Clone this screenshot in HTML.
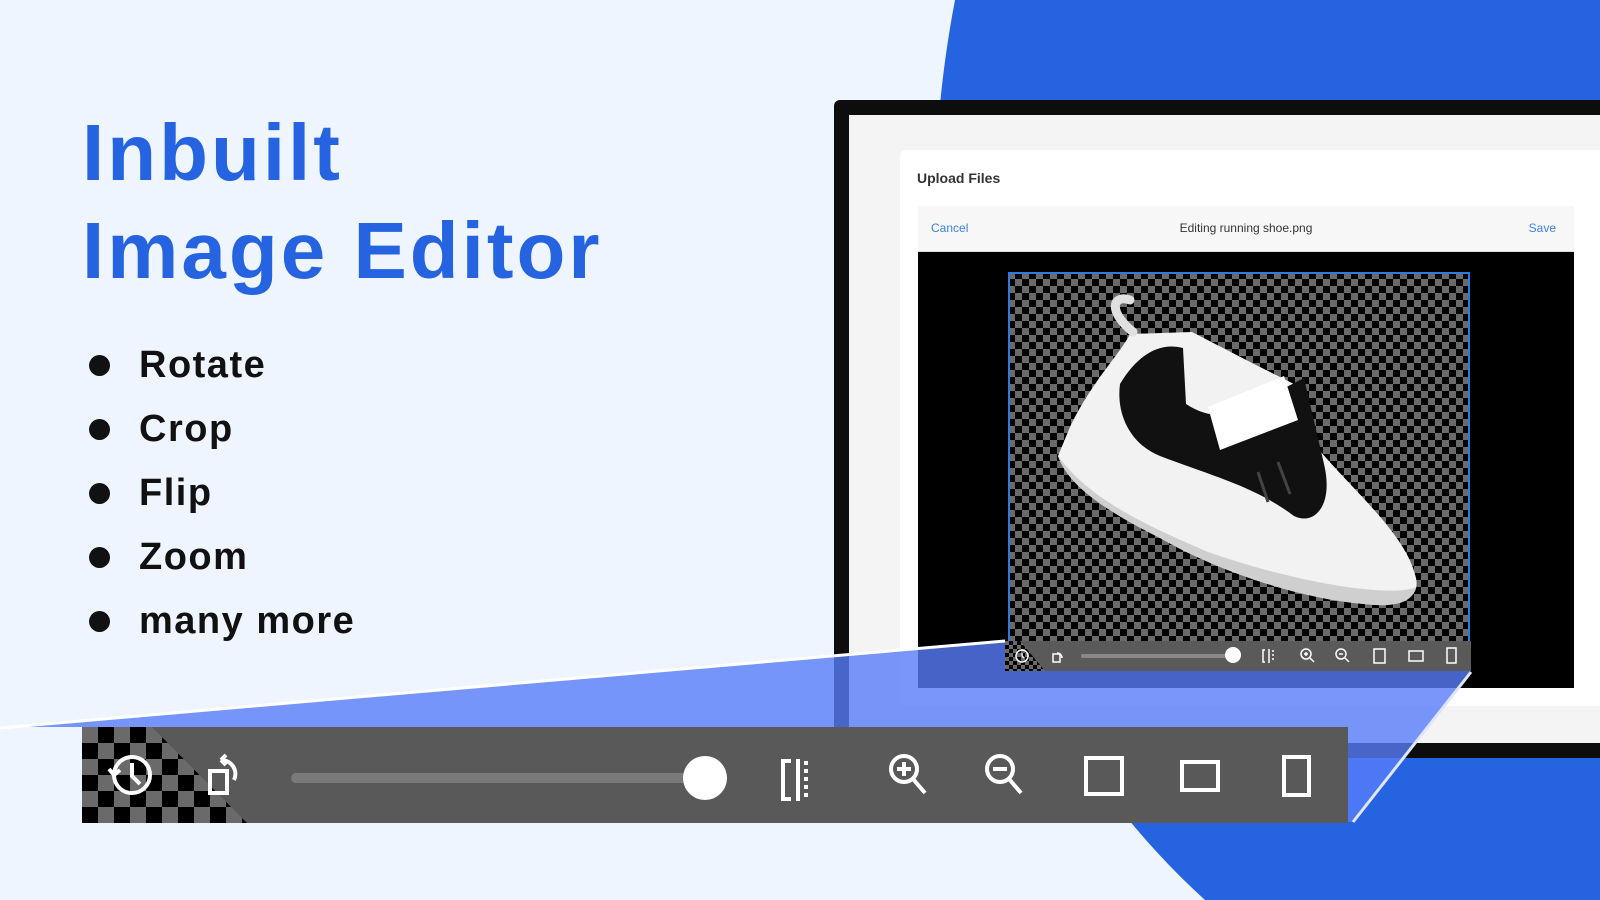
<!DOCTYPE html>
<html><head><meta charset="utf-8"><style>
*{margin:0;padding:0;box-sizing:border-box}
body{width:1600px;height:900px;overflow:hidden;background:#eff5ff;position:relative;font-family:"Liberation Sans",sans-serif}
.abs{position:absolute}
h1{position:absolute;left:82px;top:104px;font-size:80px;line-height:98px;color:#2563e0;font-weight:bold;letter-spacing:3px}
.li{position:absolute;left:139px;font-size:38px;font-weight:bold;color:#111;letter-spacing:1.5px}
.dot{position:absolute;left:89px;width:21px;height:21px;border-radius:50%;background:#111}
.chk{background:repeating-conic-gradient(#000 0 25%,#6a6a6a 0 50%) 0 0/16px 16px}
</style></head><body>
<svg class="abs" style="left:0;top:0" width="1600" height="900">
<path d="M955,0 C905,260 930,650 1205,900 L1600,900 L1600,0 Z" fill="#2563e0"/>
</svg>
<h1>Inbuilt<br>Image Editor</h1>
<div class="dot" style="top:355px"></div><div class="li" style="top:344px">Rotate</div>
<div class="dot" style="top:419px"></div><div class="li" style="top:408px">Crop</div>
<div class="dot" style="top:483px"></div><div class="li" style="top:472px">Flip</div>
<div class="dot" style="top:547px"></div><div class="li" style="top:536px">Zoom</div>
<div class="dot" style="top:611px"></div><div class="li" style="top:600px">many more</div>

<!-- monitor -->
<div class="abs" style="left:834px;top:100px;width:780px;height:658px;background:#0d0d0d;border-radius:6px 0 0 0"></div>
<div class="abs" style="left:849px;top:115px;width:760px;height:628px;background:#f4f4f4"></div>
<div class="abs" style="left:900px;top:150px;width:720px;height:556px;background:#fff;border-radius:6px"></div>
<div class="abs" style="left:917px;top:170px;font-size:14px;font-weight:bold;color:#333">Upload Files</div>
<div class="abs" style="left:918px;top:206px;width:656px;height:46px;background:#f7f7f7;border-bottom:1px solid #ddd;font-size:12px">
<span class="abs" style="left:13px;top:15px;color:#3b82e0">Cancel</span>
<span class="abs" style="left:0;width:656px;text-align:center;top:15px;color:#333">Editing running shoe.png</span>
<span class="abs" style="right:18px;top:15px;color:#3b82e0">Save</span></div>
<div class="abs" style="left:918px;top:252px;width:656px;height:436px;background:#000"></div>
<div class="abs chk" style="left:1008px;top:272px;width:462px;height:370px;background-size:14px 14px"></div>
<div class="abs" style="left:1008px;top:272px;width:462px;height:383px;border:2px solid #2d7be0"></div>
<!-- shoe -->
<svg class="abs" style="left:1008px;top:272px" width="462" height="370">
<path d="M62,155 C82,112 112,82 122,62 L184,60 L246,92 L286,112 L306,172 C348,222 398,262 408,306 C413,328 388,336 356,332 C286,326 204,296 152,266 C100,240 60,214 50,184 Z" fill="#f2f2f2"/>
<path d="M50,184 C60,214 100,240 152,266 C204,296 286,326 356,332 C388,336 405,330 408,315 C390,325 300,315 200,280 C130,250 80,225 50,184Z" fill="#cfcfcf"/>
<path d="M112,112 C130,82 152,70 175,76 L178,132 C205,150 235,146 265,122 L296,106 L316,192 C326,234 306,254 286,244 C246,214 204,204 152,184 C122,172 108,142 112,112Z" fill="#111"/>
<path d="M200,135 L276,104 L290,148 L212,178 Z" fill="#fff"/>
<path d="M125,60 C100,40 104,22 122,28" stroke="#e0e0e0" stroke-width="9" fill="none" stroke-linecap="round"/>
<path d="M250,200 L260,230 M270,190 L282,222" stroke="#444" stroke-width="3"/>
</svg>
<!-- blue overlay -->
<svg class="abs" style="left:0;top:0" width="1600" height="900">
<polygon points="0,728 1005,641 1471,670 1353,822 1348,822 1348,727 0,727" fill="rgba(88,125,250,0.8)"/>
<polyline points="0,728 1005,641" stroke="#fff" stroke-width="3" fill="none"/>
<polyline points="1471,672 1353,822" stroke="#dfe6ff" stroke-width="3" fill="none"/>
</svg>
<!-- small toolbar -->
<div class="abs" style="left:1005px;top:641px;width:466px;height:30px;background:#5a5a5a"></div>
<div class="abs chk" style="left:1005px;top:641px;width:40px;height:30px;background-size:8px 8px;clip-path:polygon(0 0,15px 0,40px 30px,0 30px)"></div>
<div class="abs" style="left:1081px;top:654px;width:151px;height:4px;background:#888;border-radius:2px"></div>
<div class="abs" style="left:1225px;top:647px;width:16px;height:16px;background:#fff;border-radius:50%"></div>
<svg class="abs" style="left:1005px;top:641px" width="466" height="30" fill="none" stroke="#fff" stroke-width="1.5">
<circle cx="17" cy="15" r="6"/><path d="M17,12v3l2,2"/>
<rect x="48" y="13" width="7" height="8"/><path d="M52,12 a5,5 0 0 1 5,5"/>
<path d="M264,8v14M260,9h-2v12h2" /><path d="M268,9v12" stroke-dasharray="2 2"/>
<circle cx="301" cy="13" r="5"/><path d="M305,17l4,4M299,13h4M301,11v4"/>
<circle cx="336" cy="13" r="5"/><path d="M340,17l4,4M334,13h4"/>
<rect x="369" y="8" width="11" height="14"/><rect x="404" y="10" width="14" height="10"/><rect x="442" y="7" width="9" height="15"/>
</svg>
<!-- big toolbar -->
<div class="abs" style="left:82px;top:727px;width:1266px;height:96px;background:#595959"></div>
<div class="abs chk" style="left:82px;top:727px;width:165px;height:96px;background-size:32px 32px;clip-path:polygon(0 0,70px 0,165px 96px,0 96px)"></div>
<div class="abs" style="left:291px;top:773px;width:413px;height:10px;background:#7a7a7a;border-radius:5px"></div>
<div class="abs" style="left:683px;top:756px;width:44px;height:44px;background:#fff;border-radius:50%"></div>
<svg class="abs" style="left:82px;top:727px" width="1266" height="96" fill="none" stroke="#fff" stroke-width="4">
<circle cx="50" cy="48" r="18"/><path d="M50,36v13l8,8M32,48l-5,-6M32,48l6,-5"/>
<rect x="128" y="44" width="17" height="22"/><path d="M139,33a14,14 0 0 1 13,20M139,33l5,-5M139,33l5,5"/>
<path d="M716,32v42M709,34h-8v38h8"/><path d="M724,34v38" stroke-dasharray="4 4"/>
<circle cx="822" cy="42" r="13"/><path d="M831,52l12,14M815,42h14M822,35v14"/>
<circle cx="918" cy="42" r="13"/><path d="M927,52l12,14M911,42h14"/>
<rect x="1004" y="31" width="36" height="36"/><rect x="1100" y="35" width="36" height="28"/><rect x="1202" y="30" width="25" height="38"/>
</svg>
</body></html>
